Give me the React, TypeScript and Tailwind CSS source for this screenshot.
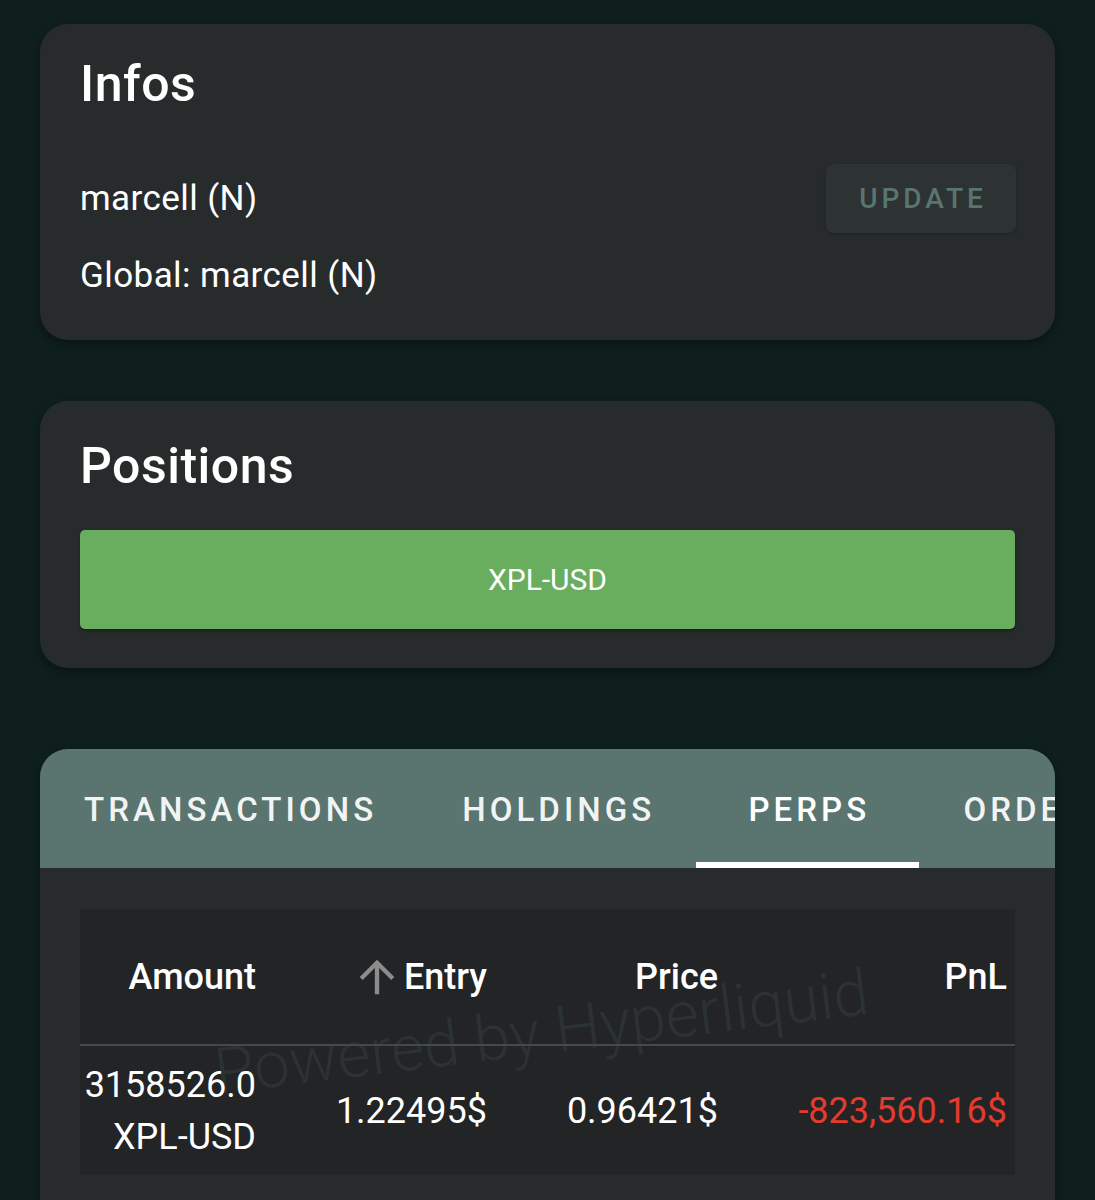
import React from "react";

function ArrowUp() {
  return (
    <svg width="52" height="52" viewBox="0 0 24 24" fill="#8c8c8c" className="-mr-[7px]">
      <path d="M4 12l1.41 1.41L11 7.83V20h2V7.83l5.58 5.59L20 12l-8-8-8 8z" />
    </svg>
  );
}

export default function App() {
  return (
    <div
      className="min-h-[1200px] w-[1095px] bg-[#0e1f1d] px-[40px] pt-[24px] overflow-hidden"
      style={{ fontFamily: "Roboto, 'Noto Sans', sans-serif" }}
    >
      {/* Infos card */}
      <div className="rounded-[28px] bg-[#272b2c] px-[40px] pt-[40px] pb-[39px] shadow-[0_4px_10px_rgba(0,0,0,0.35)]">
        <div className="h-[40px] text-[50px] font-medium leading-[40px] text-white tracking-[0.01em]">
          Infos
        </div>
        <div className="mt-[60px] flex h-[69px] items-center justify-between">
          <div className="text-[35px] leading-[50px] text-white tracking-[0.012em]">marcell (N)</div>
          <div className="mr-[-1px] flex h-[69px] w-[190px] items-center justify-center rounded-[8px] bg-[#2c3332] pl-[4px] text-[28px] font-medium tracking-[0.14em] text-[#5a756f] shadow-[0_1px_3px_rgba(0,0,0,0.25)]">
            UPDATE
          </div>
        </div>
        <div className="mt-[18px] text-[35px] leading-[50px] text-white tracking-[0.012em]">
          Global: marcell (N)
        </div>
      </div>

      {/* Positions card */}
      <div className="mt-[61px] rounded-[28px] bg-[#272b2c] px-[40px] pt-[40px] pb-[39px] shadow-[0_4px_10px_rgba(0,0,0,0.35)]">
        <div className="h-[50px] text-[50px] font-medium leading-[50px] text-white tracking-[0.01em]">
          Positions
        </div>
        <div className="mt-[39px] flex h-[99px] items-center justify-center rounded-[5px] bg-[#69ad5f] text-[30px] text-white shadow-[0_2px_3px_rgba(0,0,0,0.3)]">
          XPL-USD
        </div>
      </div>

      {/* Tabs card */}
      <div className="mt-[81px] rounded-t-[28px] bg-[#272b2c] pb-[40px] shadow-[0_4px_10px_rgba(0,0,0,0.35)] overflow-hidden">
        <div className="flex h-[119px] bg-[#5a756f] overflow-hidden">
          {["TRANSACTIONS", "HOLDINGS", "PERPS", "ORDERS"].map((t, i) => (
            <div
              key={t}
              className={
                "relative flex shrink-0 min-w-[223px] items-center justify-center pl-[44px] pr-[41px] pt-[2px] text-[33px] font-medium tracking-[0.123em] " +
                (i === 2 ? "text-white" : "text-[#f2f4f3]")
              }
            >
              {t}
              {i === 2 && <div className="absolute bottom-0 left-0 right-0 h-[6px] bg-white" />}
            </div>
          ))}
        </div>

        <div className="relative mx-[40px] mt-[41px] overflow-hidden bg-[#222426]">
          <div
            className="pointer-events-none absolute left-[135px] top-[124px] whitespace-nowrap text-[64px] font-light leading-[80px] text-[rgba(130,175,165,0.10)] rotate-[-7deg] origin-left"
            style={{ fontFamily: "Roboto, 'Liberation Sans', sans-serif" }}
          >
            Powered by Hyperliquid
          </div>
          <div className="relative w-[967px]">
            <div className="flex h-[137px] items-center border-b-[2px] border-[#45494a] text-[36px] font-medium text-white">
              <div className="w-[216px] shrink-0 pr-[40px] text-right">Amount</div>
              <div className="flex w-[231px] shrink-0 items-center justify-end gap-[8px] pr-[40px]">
                <ArrowUp />
                <span>Entry</span>
              </div>
              <div className="w-[231px] shrink-0 pr-[40px] text-right">Price</div>
              <div className="w-[289px] shrink-0 pr-[40px] text-right">PnL</div>
            </div>
            <div className="flex h-[129px] items-center text-[36px] text-white">
              <div className="w-[216px] shrink-0 pr-[40px] text-right leading-[52px]">
                3158526.0
                <br />
                XPL-USD
              </div>
              <div className="w-[231px] shrink-0 pr-[40px] text-right">1.22495$</div>
              <div className="w-[231px] shrink-0 pr-[40px] text-right">0.96421$</div>
              <div className="w-[289px] shrink-0 pr-[40px] text-right text-[#e53a2e]">-823,560.16$</div>
            </div>
          </div>
        </div>
      </div>
    </div>
  );
}
